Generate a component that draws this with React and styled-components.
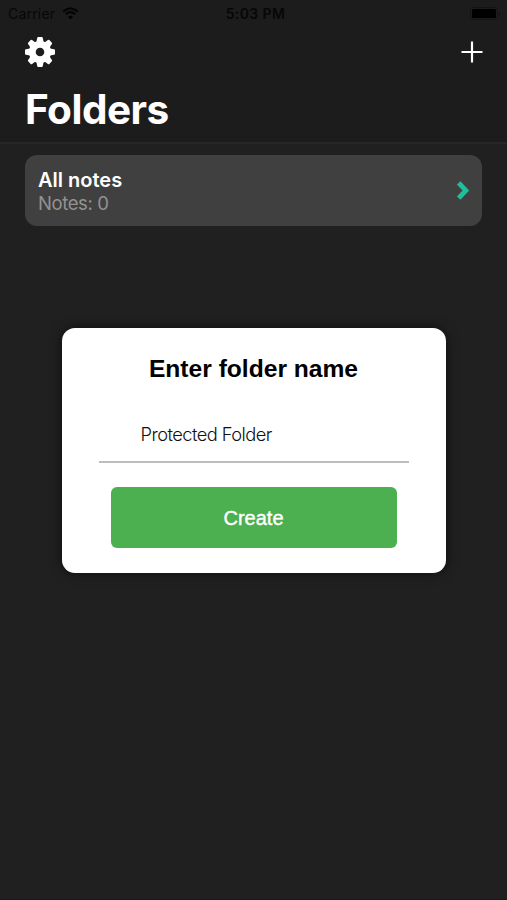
import { useState } from "react";
import styled, { createGlobalStyle } from "styled-components";

const TEETH = [0, 45, 90, 135, 180, 225, 270, 315];

const GearIcon = () => (
  <svg width="30" height="30" viewBox="-15 -15 30 30">
    <circle r="7.7" fill="none" stroke="#fff" strokeWidth="6.8" />
    {TEETH.map((angle) => (
      <path
        key={angle}
        d="M-3.6 -10L-2.8 -14Q-2.6 -15 -1.8 -15H1.8Q2.6 -15 2.8 -14L3.6 -10Z"
        fill="#fff"
        transform={`rotate(${angle})`}
      />
    ))}
  </svg>
);

const PlusIcon = () => (
  <svg width="22" height="22" viewBox="0 0 22 22">
    <path d="M11 0.5V21.5M0.5 11H21.5" stroke="#fff" strokeWidth="2.2" />
  </svg>
);

const ChevronIcon = () => (
  <svg width="14" height="21" viewBox="0 0 14 21">
    <path
      d="M2.7 2.9L9.9 10.5L2.7 18.1"
      fill="none"
      stroke="#1fbf9c"
      strokeWidth="4.8"
    />
  </svg>
);

const WifiIcon = () => (
  <svg width="17" height="13" viewBox="0 0 17 13">
    <path
      d="M1.2 4.6Q8.5 -2 15.8 4.6M3.8 7.3Q8.5 3 13.2 7.3"
      fill="none"
      stroke="#040404"
      strokeWidth="2.1"
    />
    <path d="M8.5 12.5L5.9 9.7Q8.5 7.7 11.1 9.7Z" fill="#040404" />
  </svg>
);

const BatteryIcon = () => (
  <svg width="31" height="13" viewBox="0 0 31 13">
    <rect x="0.5" y="0.5" width="27" height="12" rx="3" fill="none" stroke="#141414" />
    <rect x="2" y="2" width="24" height="9" rx="1.5" fill="#000" />
    <path d="M29 4.5Q30.8 6.5 29 8.5Z" fill="#101010" />
  </svg>
);

const App = () => {
  const [name, setName] = useState("Protected Folder");

  return (
    <Screen>
      <GlobalStyle />
      <Header>
        <StatusBar>
          <Carrier>
            Carrier
            <WifiIcon />
          </Carrier>
          <Clock>5:03 PM</Clock>
          <Battery>
            <BatteryIcon />
          </Battery>
        </StatusBar>
        <Toolbar>
          <IconButton aria-label="Settings">
            <GearIcon />
          </IconButton>
          <IconButton aria-label="Add folder">
            <PlusIcon />
          </IconButton>
        </Toolbar>
        <Title>Folders</Title>
      </Header>

      <FolderList>
        <FolderCard>
          <div>
            <FolderName>All notes</FolderName>
            <NoteCount>Notes: 0</NoteCount>
          </div>
          <ChevronIcon />
        </FolderCard>
      </FolderList>

      <Overlay>
        <Dialog>
          <DialogTitle>Enter folder name</DialogTitle>
          <Field>
            <NameInput value={name} onChange={(e) => setName(e.target.value)} />
          </Field>
          <CreateButton>Create</CreateButton>
        </Dialog>
      </Overlay>
    </Screen>
  );
};

export default App;

const GlobalStyle = createGlobalStyle`
  * {
    box-sizing: border-box;
  }

  body {
    margin: 0;
    background: #202020;
    font-family: Inter, "Liberation Sans", sans-serif;
  }

  svg {
    display: block;
  }
`;

const Screen = styled.div`
  position: relative;
  height: 900px;
  overflow: hidden;
  background: #202020;
  border-bottom: 1px solid #1d171a;
`;

const Header = styled.header`
  height: 144px;
  background: #1c1c1c;
  border-bottom: 2px solid #272727;
`;

const StatusBar = styled.div`
  display: grid;
  grid-template-columns: 1fr auto 1fr;
  align-items: center;
  height: 27px;
  padding: 0 6px 0 8px;
  color: #070707;
`;

const Carrier = styled.div`
  display: flex;
  align-items: center;
  gap: 7px;
  font-size: 14px;
  letter-spacing: 0.2px;
`;

const Clock = styled.div`
  padding-left: 2px;
  font-size: 14px;
  font-weight: 600;
  letter-spacing: 0.4px;
`;

const Battery = styled.div`
  display: flex;
  justify-content: flex-end;
`;

const Toolbar = styled.div`
  display: flex;
  justify-content: space-between;
  align-items: center;
  height: 50px;
  padding: 0 24px 0 25px;
`;

const IconButton = styled.button`
  padding: 0;
  border: none;
  background: none;
  cursor: pointer;
`;

const Title = styled.h1`
  margin: 0;
  padding: 8px 0 0 25px;
  color: #fff;
  font-size: 40.5px;
  font-weight: 700;
  line-height: 50px;
  letter-spacing: -0.5px;
`;

const FolderList = styled.main`
  padding: 11px 25px;
`;

const FolderCard = styled.div`
  display: flex;
  justify-content: space-between;
  align-items: center;
  height: 71px;
  padding: 0 12px 0 13px;
  border-radius: 12px;
  background: #404040;
`;

const FolderName = styled.div`
  padding-top: 2px;
  color: #fff;
  font-size: 20px;
  font-weight: 600;
  line-height: 24px;
`;

const NoteCount = styled.div`
  color: #929292;
  font-size: 18.5px;
  line-height: 23px;
  letter-spacing: -0.4px;
`;

const Overlay = styled.div`
  position: absolute;
  inset: 0;
  display: flex;
  justify-content: center;
  align-items: flex-start;
  padding-top: 328px;
`;

const Dialog = styled.div`
  display: flex;
  flex-direction: column;
  align-items: center;
  width: 384px;
  height: 245px;
  padding-top: 25px;
  border-radius: 13px;
  background: #fff;
  box-shadow: 0 0 12px rgba(0, 0, 0, 0.6);
`;

const DialogTitle = styled.h2`
  margin: 0;
  color: #000;
  font-family: "Liberation Sans", sans-serif;
  font-size: 24.6px;
  font-weight: 700;
  line-height: 32px;
`;

const Field = styled.div`
  width: 310px;
  height: 54px;
  margin-top: 24px;
  padding: 0 42px;
  border-bottom: 2px solid #bdbdbd;
`;

const NameInput = styled.input`
  width: 100%;
  height: 50px;
  padding: 0;
  border: none;
  outline: none;
  background: transparent;
  color: #111;
  font-family: Inter, sans-serif;
  font-size: 18.3px;
  font-weight: 300;
  letter-spacing: -0.55px;
`;

const CreateButton = styled.button`
  width: 286px;
  height: 61px;
  margin-top: 24px;
  padding-top: 3px;
  border: none;
  border-radius: 6px;
  background: #4caf50;
  color: #fff;
  font-family: "Liberation Sans", sans-serif;
  font-size: 20px;
  -webkit-text-stroke: 0.4px #fff;
  cursor: pointer;
`;
